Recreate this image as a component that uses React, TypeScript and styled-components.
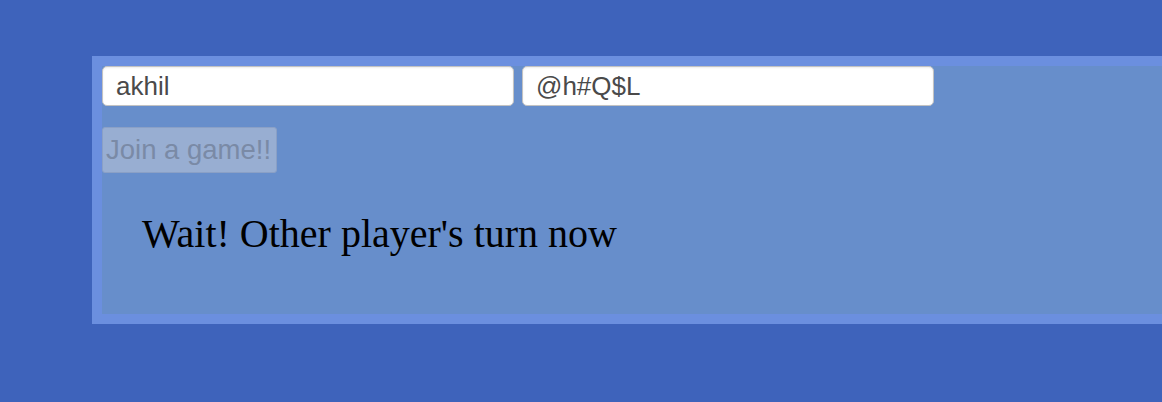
import React from "react";
import styled, { createGlobalStyle } from "styled-components";

const Global = createGlobalStyle`
  html, body { margin: 0; padding: 0; background: #3e63bb; }
  body { overflow: hidden; }
`;

const Page = styled.div`
  width: 1162px;
  height: 402px;
  overflow: hidden;
  padding: 56px 0 0 92px;
  box-sizing: border-box;
`;

const Panel = styled.section`
  width: 1200px;
  height: 268px;
  box-sizing: border-box;
  border: 10px solid #6b8fdf;
  background: #678ecb;
  display: flex;
  flex-direction: column;
  align-items: flex-start;
`;

const Row = styled.div`
  display: flex;
  gap: 8px;
`;

const Field = styled.input`
  width: 412px;
  height: 40px;
  box-sizing: border-box;
  border: 1px solid #c2c2c2;
  border-radius: 5px;
  background: #ffffff;
  padding: 0 13px;
  font-family: "Liberation Sans", Arial, sans-serif;
  font-size: 26px;
  color: #4a4a4a;
  outline: none;
  box-shadow: inset 0 1px 2px rgba(0, 0, 0, 0.08);
`;

const JoinButton = styled.button`
  margin-top: 21px;
  height: 46px;
  width: 175px;
  box-sizing: border-box;
  padding: 0 3px;
  border: 1px solid #8aa0c6;
  border-radius: 3px;
  background: #98aed2;
  color: #7a8aa6;
  font-family: "Liberation Sans", Arial, sans-serif;
  font-size: 27.5px;
  white-space: nowrap;
  text-align: left;
`;

const Message = styled.p`
  margin: 37px 0 0 40px;
  font-family: "Liberation Serif", "Times New Roman", serif;
  font-size: 40px;
  color: #000;
`;

export default function App() {
  return (
    <>
      <Global />
      <Page>
        <Panel>
          <Row>
            <Field defaultValue="akhil" />
            <Field defaultValue="@h#Q$L" />
          </Row>
          <JoinButton disabled>Join a game!!</JoinButton>
          <Message>Wait! Other player's turn now</Message>
        </Panel>
      </Page>
    </>
  );
}
